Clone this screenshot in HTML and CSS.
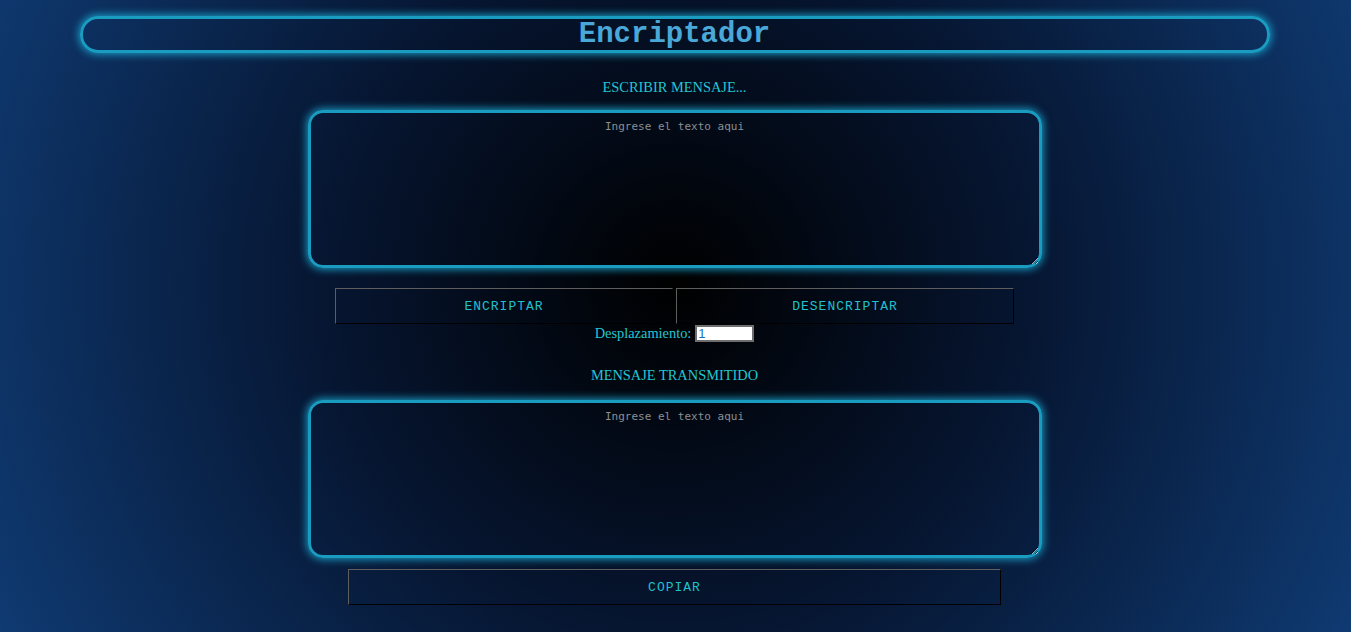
FILE: index.html
```html
<!DOCTYPE html>
<html lang="es">
<head>
<meta charset="utf-8">
<title>Encriptador</title>
<link rel="stylesheet" href="styles.css">
</head>
<body>
<main class="page">
  <header class="title-box"><h1 class="title">Encriptador</h1></header>
  <p class="label label-top">ESCRIBIR MENSAJE...</p>
  <textarea class="box" placeholder="Ingrese el texto aqui"></textarea>
  <div class="actions">
    <button class="btn btn-half">ENCRIPTAR</button>
    <button class="btn btn-half">DESENCRIPTAR</button>
  </div>
  <div class="shift">
    <label class="shift-label" for="shift">Desplazamiento:</label>
    <input class="shift-input" id="shift" type="text" value="1">
  </div>
  <p class="label label-mid">MENSAJE TRANSMITIDO</p>
  <textarea class="box" placeholder="Ingrese el texto aqui"></textarea>
  <button class="btn btn-wide">COPIAR</button>
</main>
</body>
</html>
```
FILE: styles.css
```css
html, body {
  margin: 0;
  height: 100%;
}
body {
  background: radial-gradient(circle at 50% 45%, #000000 0%, #061530 45%, #0f3a72 100%);
  font-family: "Liberation Serif", serif;
  color: #22c6d2;
  overflow: hidden;
}
.page {
  display: flex;
  flex-direction: column;
  align-items: center;
  padding-top: 16px;
  padding-right: 2px;
}
.title-box {
  box-sizing: border-box;
  width: 1190px;
  height: 37px;
  border: 3px solid #1a9cc0;
  border-radius: 18px;
  box-shadow: 0 0 8px 1px #1aa4cc;
  display: flex;
  align-items: center;
  justify-content: center;
}
.title {
  margin: 0;
  font: bold 29px "Liberation Mono", monospace;
  color: #4aa8d8;
  line-height: 1;
}
.label {
  margin: 0;
  font-size: 14.4px;
  line-height: 18px;
}
.label-top {
  margin-top: 25px;
  margin-bottom: 14px;
}
.label-mid {
  margin-top: 24px;
  margin-bottom: 16px;
}
.box {
  box-sizing: border-box;
  width: 734px;
  height: 158px;
  background: transparent;
  border: 3px solid #1a9cc0;
  border-radius: 15px;
  box-shadow: 0 0 9px 1px #1aa4cc;
  padding: 7px;
  text-align: center;
  font: 11px "DejaVu Sans Mono", monospace;
  color: #cfd8e0;
  outline: none;
}
.box::placeholder {
  color: #8a8f95;
}
.actions {
  display: flex;
  gap: 3px;
  margin-top: 20px;
}
.btn {
  box-sizing: border-box;
  height: 36px;
  background: transparent;
  border: 1px solid;
  border-color: #5e5e5e #000 #000 #5e5e5e;
  font: 13px "Liberation Mono", monospace;
  letter-spacing: 1px;
  color: #20c0cc;
  padding: 0;
}
.btn-half {
  width: 338px;
}
.btn-wide {
  width: 653px;
  margin-top: 11px;
}
.shift {
  display: flex;
  align-items: center;
  gap: 4px;
  height: 18px;
  font-size: 14.4px;
}
.shift-input {
  box-sizing: border-box;
  width: 59px;
  height: 17px;
  border: 2px solid #6e6e6e;
  background: #fff;
  padding: 0 1px;
  font: 13px "Liberation Sans", sans-serif;
  color: #1672c4;
}
```
